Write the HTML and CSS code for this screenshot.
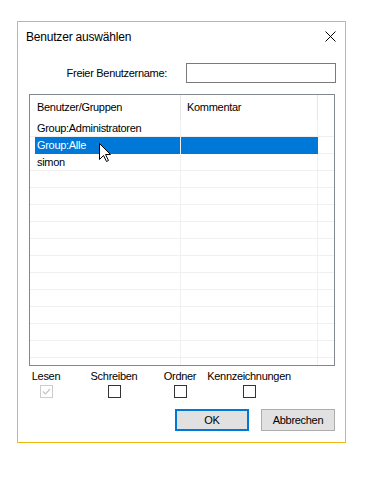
FILE: index.html
```html
<!DOCTYPE html>
<html lang="de">

<head>
    <meta charset="UTF-8">
    <meta name="viewport" content="width=device-width, initial-scale=1.0">
    <title>Benutzer auswählen</title>
    <link rel="stylesheet" href="styles.css">
</head>

<body>
    <div class="dialog">
        <div class="titlebar">
            <span class="title">Benutzer auswählen</span>
            <svg class="close" width="11" height="11" viewBox="0 0 11 11">
                <path d="M0.5 0.5 L10.5 10.5 M10.5 0.5 L0.5 10.5" stroke="#000" stroke-width="1" fill="none" />
            </svg>
        </div>

        <div class="name-row">
            <label for="freename">Freier Benutzername:</label>
            <input type="text" id="freename" class="textbox">
        </div>

        <div class="listview">
            <div class="lv-header">
                <div class="col col-user">Benutzer/Gruppen</div>
                <div class="col col-comment">Kommentar</div>
                <div class="col col-rest"></div>
            </div>
            <div class="lv-body">
                <div class="row">
                    <div class="col col-user"><span class="cell">Group:Administratoren</span></div>
                    <div class="col col-comment"></div>
                    <div class="col col-rest"></div>
                </div>
                <div class="row selected">
                    <div class="col col-user"><span class="cell">Group:Alle</span></div>
                    <div class="col col-comment"></div>
                    <div class="col col-rest"></div>
                </div>
                <div class="row">
                    <div class="col col-user"><span class="cell">simon</span></div>
                    <div class="col col-comment"></div>
                    <div class="col col-rest"></div>
                </div>
                <div class="row"><div class="col col-user"></div><div class="col col-comment"></div><div class="col col-rest"></div></div>
                <div class="row"><div class="col col-user"></div><div class="col col-comment"></div><div class="col col-rest"></div></div>
                <div class="row"><div class="col col-user"></div><div class="col col-comment"></div><div class="col col-rest"></div></div>
                <div class="row"><div class="col col-user"></div><div class="col col-comment"></div><div class="col col-rest"></div></div>
                <div class="row"><div class="col col-user"></div><div class="col col-comment"></div><div class="col col-rest"></div></div>
                <div class="row"><div class="col col-user"></div><div class="col col-comment"></div><div class="col col-rest"></div></div>
                <div class="row"><div class="col col-user"></div><div class="col col-comment"></div><div class="col col-rest"></div></div>
                <div class="row"><div class="col col-user"></div><div class="col col-comment"></div><div class="col col-rest"></div></div>
                <div class="row"><div class="col col-user"></div><div class="col col-comment"></div><div class="col col-rest"></div></div>
                <div class="row"><div class="col col-user"></div><div class="col col-comment"></div><div class="col col-rest"></div></div>
                <div class="row"><div class="col col-user"></div><div class="col col-comment"></div><div class="col col-rest"></div></div>
                <div class="row"><div class="col col-user"></div><div class="col col-comment"></div><div class="col col-rest"></div></div>
            </div>

            <!-- mouse pointer over the selected row -->
            <svg class="pointer" width="13" height="20" viewBox="0 0 13 20">
                <path d="M0.5 0.5 V16.5 L4.5 12.5 L7.5 18.5 L9.5 17.5 L6.5 11.5 H11.5 Z" fill="#fff" stroke="#000" stroke-width="1" stroke-linejoin="miter" />
            </svg>
        </div>

        <div class="rights">
            <div class="right r-read">
                <span class="right-label">Lesen</span>
                <span class="check disabled">
                    <svg width="11" height="11" viewBox="0 0 11 11">
                        <path d="M2 5.5 L4.5 8 L9 3" stroke="#c4c4c4" stroke-width="1.2" fill="none" />
                    </svg>
                </span>
            </div>
            <div class="right r-write">
                <span class="right-label">Schreiben</span>
                <span class="check"></span>
            </div>
            <div class="right r-folder">
                <span class="right-label">Ordner</span>
                <span class="check"></span>
            </div>
            <div class="right r-tags">
                <span class="right-label">Kennzeichnungen</span>
                <span class="check"></span>
            </div>
        </div>

        <div class="buttons">
            <button type="button" class="btn default">OK</button>
            <button type="button" class="btn">Abbrechen</button>
        </div>
    </div>
</body>

</html>
```

FILE: styles.css
```css
body {
    margin: 0;
    padding: 21px 0 0 17px;
    background-color: #fff;
    font-family: "Liberation Sans", Arial, sans-serif;
    font-size: 11px;
    letter-spacing: -0.3px;
    color: #000;
}

.dialog {
    box-sizing: border-box;
    width: 329px;
    height: 422px;
    border: 1px solid #f1b812;
    background: #fff;
    display: flex;
    flex-direction: column;
}

.titlebar {
    display: flex;
    justify-content: space-between;
    align-items: flex-start;
    padding: 7px 9px 0 8px;
}

.title {
    font-size: 12px;
    line-height: 16px;
    letter-spacing: -0.2px;
    color: #000;
}

.close {
    margin-top: 2px;
}

.name-row {
    display: flex;
    justify-content: flex-end;
    align-items: center;
    margin-top: 18px;
    padding-right: 9px;
}

.name-row label {
    margin-right: 19px;
    line-height: 13px;
}

.textbox {
    box-sizing: border-box;
    width: 150px;
    height: 20px;
    margin: 0;
    border: 1px solid #7a7a7a;
    padding: 0 3px;
    font: inherit;
}

.listview {
    position: relative;
    box-sizing: border-box;
    height: 272px;
    margin: 11px 10px 0 11px;
    border: 1px solid #828790;
    overflow: hidden;
}

.lv-header {
    display: flex;
    height: 25px;
    line-height: 25px;
}

.lv-header .col-user {
    border-right: 1px solid #e5e5e5;
    padding-left: 7px;
}

.lv-header .col-comment {
    border-right: 1px solid #e5e5e5;
    padding-left: 6px;
}

.col {
    box-sizing: border-box;
    white-space: nowrap;
    overflow: hidden;
}

.col-user {
    width: 151px;
}

.col-comment {
    width: 137px;
}

.col-rest {
    flex: 1;
}

.lv-body {
    height: 245px;
}

.row {
    display: flex;
    height: 17px;
    line-height: 16px;
}

.row .col {
    border-bottom: 1px solid #f0f0f0;
}

.row .col-user,
.row .col-comment {
    border-right: 1px solid #f0f0f0;
}

.cell {
    display: block;
    margin-left: 5px;
    padding-left: 2px;
    height: 16px;
}

.row.selected .cell {
    background: #0078d7;
    color: #fff;
    height: 17px;
}

.row.selected .col-user {
    border-bottom: none;
}

.row.selected .col-comment {
    background: #0078d7;
    border-bottom-color: #0078d7;
    border-right-color: #0078d7;
}

.pointer {
    position: absolute;
    left: 69px;
    top: 48px;
}

.rights {
    display: flex;
    margin: 4px 0 0 11px;
}

.right {
    display: flex;
    flex-direction: column;
    align-items: center;
}

.r-read {
    width: 34px;
}

.r-write {
    width: 102px;
}

.r-folder {
    width: 30px;
}

.r-tags {
    width: 108px;
}

.right-label {
    line-height: 13px;
    white-space: nowrap;
}

.check {
    box-sizing: border-box;
    display: block;
    width: 13px;
    height: 13px;
    margin-top: 2px;
    border: 1px solid #333;
    background: #fff;
}

.check.disabled {
    border-color: #cccccc;
}

.check svg {
    display: block;
}

.buttons {
    display: flex;
    justify-content: flex-end;
    gap: 12px;
    margin-top: 11px;
    padding-right: 10px;
}

.btn {
    box-sizing: border-box;
    width: 74px;
    height: 22px;
    margin: 0;
    padding: 0;
    border: 1px solid #adadad;
    background: #e1e1e1;
    font: inherit;
    letter-spacing: inherit;
    color: #000;
}

.btn.default {
    border: 2px solid #0078d7;
}
```
